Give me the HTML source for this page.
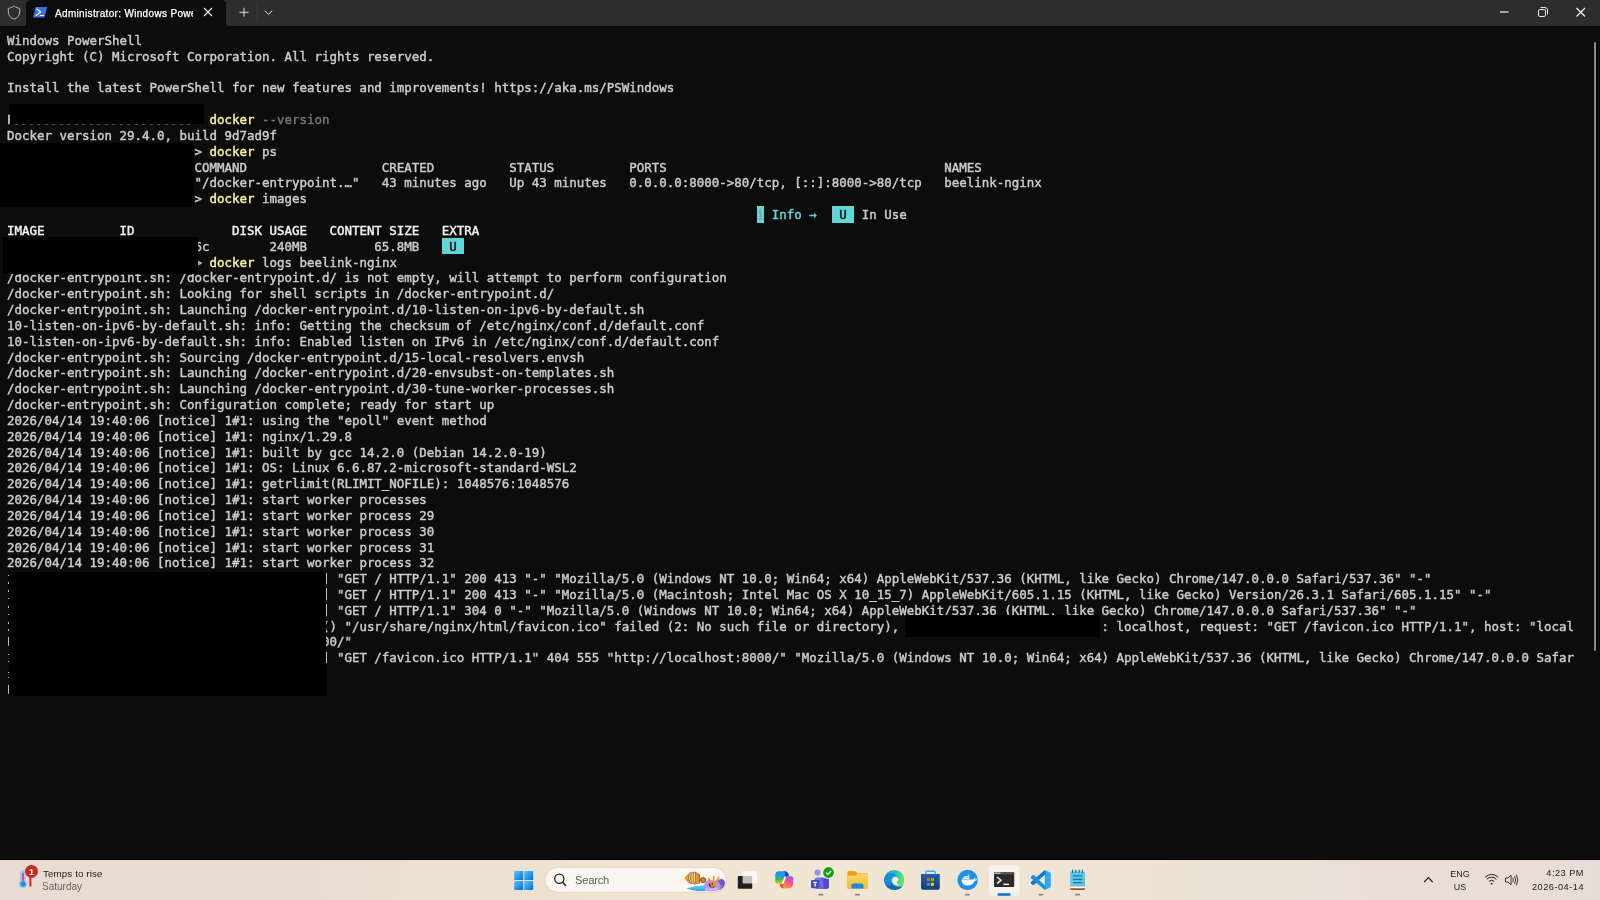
<!DOCTYPE html>
<html lang="en"><head><meta charset="utf-8"><title>Administrator: Windows PowerShell</title>
<style>
*{box-sizing:border-box;margin:0;padding:0}
html,body{width:1600px;height:900px;overflow:hidden;background:#0c0c0c}
body{position:relative;font-family:"Liberation Sans",sans-serif}
#titlebar{position:absolute;left:0;top:0;width:1600px;height:26px;background:#2d2d2d}
#tabtitle{position:absolute;left:54.6px;top:7px;width:137.6px;height:14px;overflow:hidden;white-space:nowrap;color:#fff;font-size:10px;line-height:14px;letter-spacing:0.33px;will-change:transform;-webkit-text-stroke:0.25px}
#term{position:absolute;left:6.7px;top:33px;white-space:pre;font-family:"DejaVu Sans Mono","Liberation Mono",monospace;font-size:12.46px;line-height:15.8333px;color:#cccccc;will-change:transform;-webkit-text-stroke:0.42px}
#term b{color:#f2f2f2;font-weight:normal}
.y{color:#f9f1a5}.g{color:#767676}.c{color:#61d6d6}.cb{background:#61d6d6;color:#0c0c0c;padding:0.8px 0 0.6px}.ci{color:#7fa3a3}
.box{position:absolute;background:#000}
#marks i{position:absolute;left:8px;width:1px;background:#b8b8b8;display:block}
#dash{position:absolute;left:15px;top:124px;width:176px;height:1px;background:repeating-linear-gradient(90deg,#8a8a8a 0 3px,transparent 3px 7.5px);opacity:.5}
#scroll{position:absolute;left:1594px;top:42px;width:2px;height:609px;background:#8a8a8a;border-radius:1px}
.tt{position:absolute;font-size:10px;line-height:14px;white-space:nowrap;margin-top:-860px;will-change:transform}
.ts{position:absolute;font-size:9px;line-height:12px;white-space:nowrap;color:#1c1c1c;margin-top:-860px;will-change:transform}
#taskbar{position:absolute;left:0;top:860px;width:1600px;height:40px;background:linear-gradient(90deg,#e8dbd3 0%,#e9ddd3 20%,#efe4d2 40%,#f1e6d2 52%,#efe4d4 65%,#eadfd6 82%,#e8dcd6 100%)}
</style></head><body>
<div id="titlebar">
<svg id="tbsvg" width="1600" height="27" viewBox="0 0 1600 27" style="position:absolute;left:0;top:0">
<path d="M23 26.5 L23 26 Q26 26 26 23 L26 5 Q26 0 31 0 L222 0 Q226 0 226 4 L226 23 Q226 26 229 26 L229 26.5 Z" fill="#0c0c0c"/>
<path d="M14 6 C16.2 7.6 18 8.2 19.7 8.3 L19.7 12 C19.7 15.6 17.3 18 14 19.2 C10.7 18 8.3 15.6 8.3 12 L8.3 8.3 C10 8.2 11.8 7.6 14 6 Z" fill="none" stroke="#b4b4b4" stroke-width="1"/>
<path d="M35.6 7 L47.2 7 L44.6 17.4 L33 17.4 Z" fill="#3b72da"/>
<path d="M36.8 9 L40.6 12 L36 15.6" fill="none" stroke="#fff" stroke-width="1.2" stroke-linecap="round" stroke-linejoin="round"/>
<path d="M40.3 15.5 L43.4 15.5" stroke="#fff" stroke-width="1.2" stroke-linecap="round"/>
<path d="M204 8 L212 16 M212 8 L204 16" stroke="#f0f0f0" stroke-width="1.1"/>
<path d="M239.5 12.3 L248.5 12.3 M244 7.8 L244 16.8" stroke="#e0e0e0" stroke-width="1"/>
<path d="M257 2.5 L257 22" stroke="#3b3b3b" stroke-width="1"/>
<path d="M264.8 10.8 L268.5 14.4 L272.2 10.8" fill="none" stroke="#e0e0e0" stroke-width="1"/>
<path d="M1500 12 L1508.5 12" stroke="#f0f0f0" stroke-width="1.2"/>
<rect x="1538.5" y="9.5" width="7" height="7" rx="1.5" fill="none" stroke="#e6e6e6" stroke-width="1"/>
<path d="M1540.5 7.5 L1545 7.5 Q1547.5 7.5 1547.5 10 L1547.5 14.5" fill="none" stroke="#e6e6e6" stroke-width="1"/>
<path d="M1576.5 8 L1585 16.5 M1585 8 L1576.5 16.5" stroke="#f4f4f4" stroke-width="1.2"/>
</svg>
<div id="tabtitle">Administrator: Windows PowerShell</div>
</div>
<pre id="term">Windows PowerShell
Copyright (C) Microsoft Corporation. All rights reserved.

Install the latest PowerShell for new features and improvements! https://aka.ms/PSWindows

P                          <span class="y">docker</span> <span class="g">--version</span>
Docker version 29.4.0, build 9d7ad9f
                         &gt; <span class="y">docker</span> ps
                         COMMAND                  CREATED          STATUS          PORTS                                     NAMES
                         &quot;/docker-entrypoint.…&quot;   43 minutes ago   Up 43 minutes   0.0.0.0:8000-&gt;80/tcp, [::]:8000-&gt;80/tcp   beelink-nginx
                         &gt; <span class="y">docker</span> images
                                                                                                    <span class="cb ci">i</span><span class="c"> Info →</span>  <span class="cb"> U </span> In Use
<b>IMAGE          ID             DISK USAGE   CONTENT SIZE   EXTRA</b>
                         6c        240MB         65.8MB   <span class="cb"> U </span>
                         &gt; <span class="y">docker</span> logs beelink-nginx
/docker-entrypoint.sh: /docker-entrypoint.d/ is not empty, will attempt to perform configuration
/docker-entrypoint.sh: Looking for shell scripts in /docker-entrypoint.d/
/docker-entrypoint.sh: Launching /docker-entrypoint.d/10-listen-on-ipv6-by-default.sh
10-listen-on-ipv6-by-default.sh: info: Getting the checksum of /etc/nginx/conf.d/default.conf
10-listen-on-ipv6-by-default.sh: info: Enabled listen on IPv6 in /etc/nginx/conf.d/default.conf
/docker-entrypoint.sh: Sourcing /docker-entrypoint.d/15-local-resolvers.envsh
/docker-entrypoint.sh: Launching /docker-entrypoint.d/20-envsubst-on-templates.sh
/docker-entrypoint.sh: Launching /docker-entrypoint.d/30-tune-worker-processes.sh
/docker-entrypoint.sh: Configuration complete; ready for start up
2026/04/14 19:40:06 [notice] 1#1: using the "epoll" event method
2026/04/14 19:40:06 [notice] 1#1: nginx/1.29.8
2026/04/14 19:40:06 [notice] 1#1: built by gcc 14.2.0 (Debian 14.2.0-19)
2026/04/14 19:40:06 [notice] 1#1: OS: Linux 6.6.87.2-microsoft-standard-WSL2
2026/04/14 19:40:06 [notice] 1#1: getrlimit(RLIMIT_NOFILE): 1048576:1048576
2026/04/14 19:40:06 [notice] 1#1: start worker processes
2026/04/14 19:40:06 [notice] 1#1: start worker process 29
2026/04/14 19:40:06 [notice] 1#1: start worker process 30
2026/04/14 19:40:06 [notice] 1#1: start worker process 31
2026/04/14 19:40:06 [notice] 1#1: start worker process 32
                                          ] "GET / HTTP/1.1" 200 413 "-" "Mozilla/5.0 (Windows NT 10.0; Win64; x64) AppleWebKit/537.36 (KHTML, like Gecko) Chrome/147.0.0.0 Safari/537.36" "-"
                                          ] "GET / HTTP/1.1" 200 413 "-" "Mozilla/5.0 (Macintosh; Intel Mac OS X 10_15_7) AppleWebKit/605.1.15 (KHTML, like Gecko) Version/26.3.1 Safari/605.1.15" "-"
                                          ] "GET / HTTP/1.1" 304 0 "-" "Mozilla/5.0 (Windows NT 10.0; Win64; x64) AppleWebKit/537.36 (KHTML, like Gecko) Chrome/147.0.0.0 Safari/537.36" "-"
                                          () "/usr/share/nginx/html/favicon.ico" failed (2: No such file or directory),                           : localhost, request: "GET /favicon.ico HTTP/1.1", host: "local
                                          00/"
                                          ] "GET /favicon.ico HTTP/1.1" 404 555 "http://localhost:8000/" "Mozilla/5.0 (Windows NT 10.0; Win64; x64) AppleWebKit/537.36 (KHTML, like Gecko) Chrome/147.0.0.0 Safar</pre>
<div class="box" style="left:10px;top:104px;width:194px;height:20px"></div>
<div class="box" style="left:0;top:143px;width:194px;height:64px"></div>
<div class="box" style="left:3px;top:237px;width:195px;height:37px"></div>
<div class="box" style="left:9px;top:572px;width:317px;height:124px"></div>
<div class="box" style="left:906px;top:615px;width:194px;height:22px"></div>
<div id="marks"><i style="top:574.6px;height:1.4px"></i><i style="top:582.2px;height:1.4px"></i><i style="top:590.4px;height:1.4px"></i><i style="top:598px;height:1.4px"></i><i style="top:606.4px;height:1.4px"></i><i style="top:613.8px;height:1.4px"></i><i style="top:622.2px;height:1.4px"></i><i style="top:629.4px;height:1.4px"></i><i style="top:654px;height:1.4px"></i><i style="top:661px;height:1.4px"></i><i style="top:672px;height:1.4px"></i><i style="top:677px;height:1.4px"></i><i style="top:636.6px;height:9.8px"></i><i style="top:684.9px;height:9.2px"></i><i style="left:326.1px;width:1.3px;top:572.5px;height:11.8px;background:#c4c4c4"></i><i style="left:326.1px;width:1.3px;top:588.4px;height:11.8px;background:#c4c4c4"></i><i style="left:326.1px;width:1.3px;top:604.2px;height:11.8px;background:#c4c4c4"></i><i style="left:326.1px;width:1.3px;top:651.7px;height:11.8px;background:#c4c4c4"></i></div>
<div id="dash"></div>
<div id="scroll"></div>
<div style="position:absolute;left:0;top:859px;width:1600px;height:1px;background:#040404"></div>
<div id="taskbar">
<svg width="1600" height="40" viewBox="0 860 1600 40" style="position:absolute;left:0;top:0">
<defs>
<linearGradient id="gwin" x1="0" y1="0" x2="1" y2="1"><stop offset="0" stop-color="#52c6ff"/><stop offset="1" stop-color="#0670d0"/></linearGradient>
<linearGradient id="gfold" x1="0" y1="0" x2="0" y2="1"><stop offset="0" stop-color="#ffd968"/><stop offset="1" stop-color="#f7bb2c"/></linearGradient>
<linearGradient id="gstore" x1="0" y1="0" x2="0" y2="1"><stop offset="0" stop-color="#1f5fad"/><stop offset="1" stop-color="#163d75"/></linearGradient>
<linearGradient id="gcopL" x1="0" y1="0" x2="0" y2="1"><stop offset="0" stop-color="#1a96f2"/><stop offset="0.35" stop-color="#1fa0d8"/><stop offset="0.65" stop-color="#46b85a"/><stop offset="1" stop-color="#efd000"/></linearGradient>
<linearGradient id="gcopR" x1="0.8" y1="0" x2="0.2" y2="1"><stop offset="0" stop-color="#a052f2"/><stop offset="0.45" stop-color="#ee4f94"/><stop offset="1" stop-color="#ff9a3c"/></linearGradient>
<linearGradient id="gedge" x1="0" y1="0" x2="1" y2="0.3"><stop offset="0" stop-color="#1ea0e0"/><stop offset="0.6" stop-color="#2cc2b8"/><stop offset="1" stop-color="#6ee060"/></linearGradient>
<linearGradient id="gteams" x1="0" y1="0" x2="1" y2="0"><stop offset="0" stop-color="#7b83eb"/><stop offset="1" stop-color="#5a4fd2"/></linearGradient>
<linearGradient id="gwater" x1="0" y1="0" x2="0" y2="1"><stop offset="0" stop-color="#58d6e2"/><stop offset="1" stop-color="#38a2d8"/></linearGradient>
</defs>
<!-- weather -->
<rect x="20" y="870" width="6" height="16" rx="3" fill="#93cdf6"/>
<circle cx="23" cy="884" r="4.3" fill="#93cdf6"/>
<rect x="22" y="872.5" width="2" height="9" rx="1" fill="#e8506a"/>
<circle cx="23" cy="884" r="2.7" fill="#2b8fe0"/>
<rect x="29.4" y="877" width="2" height="9.5" fill="#f01a1a"/>
<circle cx="31.5" cy="871.4" r="6.4" fill="#c42b1c"/>
<!-- start -->
<rect x="514.2" y="871" width="9" height="9" rx="0.6" fill="url(#gwin)"/>
<rect x="524.2" y="871" width="9" height="9" rx="0.6" fill="url(#gwin)"/>
<rect x="514.2" y="881" width="9" height="9" rx="0.6" fill="url(#gwin)"/>
<rect x="524.2" y="881" width="9" height="9" rx="0.6" fill="url(#gwin)"/>
<!-- search pill -->
<rect x="545" y="867.3" width="181.6" height="25" rx="12.5" fill="#faf6f1" stroke="#dfd2c2" stroke-width="1"/>
<circle cx="559.3" cy="878.8" r="4.6" fill="none" stroke="#222" stroke-width="1.3"/>
<path d="M562.7 882.3 L565.6 885.4" stroke="#222" stroke-width="1.5" stroke-linecap="round"/>
<!-- fish -->
<path d="M686.4 888.2 Q696 885.4 705.4 885.2 L705.4 891 Q693 891.4 686.4 888.2 Z" fill="url(#gwater)"/>
<path d="M684.7 878.2 Q687 873.6 692 871.9 Q696.4 871.4 699.4 873.6 Q700.4 878.6 699.4 883.6 Q695 885 690.6 883.6 Q686.6 882 684.7 878.2 Z" fill="#f29212"/>
<path d="M689.4 873.2 Q688 878 689.8 883 L691.2 883.5 Q689.8 878 691 872.4 Z" fill="#f4f6fc" stroke="#2a2448" stroke-width="0.45"/>
<path d="M694 872 Q693 878 694.4 884.2 L695.8 884 Q694.8 878 695.6 872.2 Z" fill="#f4f6fc" stroke="#2a2448" stroke-width="0.45"/>
<path d="M691.4 873.4 Q693 872.6 693.6 873.6 L693.4 882.6 L691.8 882.4 Q690.8 878 691.4 873.4 Z" fill="#fbb81c"/>
<path d="M699.2 874 Q700.4 878.6 699.2 883.4" stroke="#2a2448" stroke-width="0.6" fill="none"/>
<circle cx="703.1" cy="880.1" r="2.5" fill="#f57e08" stroke="#2a2040" stroke-width="0.7"/>
<path d="M704 886.6 Q704.4 881 709 879.6 Q712 881 716.4 880.6 Q718.4 878.6 721.6 878.8 Q725.2 879.6 725 883.4 Q724.4 888.4 719 890.2 Q711 891.6 706 890.6 Q703.8 889.4 704 886.6 Z" fill="#b094ea"/>
<path d="M717.6 881 Q720 878.8 723 879.4 Q725.2 880.6 724.8 884 Q724 887.6 720.4 889.4 Q722 885 717.6 881 Z" fill="#6a58cc"/>
<path d="M708.6 884 Q712 881.8 715.4 883.6 Q716 887 712.4 888 Q709 887.6 708.6 884 Z" fill="#2e2458"/>
<path d="M711.6 886 L709 878.6 M713.4 885.6 L713.8 876.4 M715 885.8 L718.6 877 M712 887 L716 883" stroke="#f2901c" stroke-width="1.5" stroke-linecap="round"/>
<path d="M705.4 888 Q711 890.6 718.4 888.2" stroke="#d6bcf6" stroke-width="1.3" fill="none"/>
<path d="M719.6 888.6 L722.4 885.4" stroke="#f07868" stroke-width="1" stroke-linecap="round"/>
<!-- task view -->
<rect x="737.8" y="876.1" width="14.4" height="12.7" rx="0.8" fill="#1f1f1f"/>
<rect x="742.6" y="871" width="14.6" height="12.6" rx="0.8" fill="#ffffff" fill-opacity="0.72"/>
<!-- copilot -->
<path d="M778 871.2 L785 871.2 Q788.6 871.6 788.9 876.4 L784.6 876.4 L781.4 884 L778 884 Q775.3 883.8 775.2 881 L775.3 874 Q775.6 871.4 778 871.2 Z" fill="url(#gcopL)"/>
<path d="M784 871.2 Q788.5 871.2 788.9 876.4 L785.4 876.4 Q785.8 873 784 871.2 Z" fill="#1446cc"/>
<path d="M779.6 884 L783.4 884 L785.6 888.2 L782.6 888.2 Q780.4 887.8 779.6 884 Z" fill="#f0502c"/>
<path d="M785.8 876.2 L790.8 876.2 Q793.5 876.4 793.4 879.2 L792.9 884.6 Q792.3 888 789.2 888.2 L783.6 888.2 Q782.4 886.4 783.4 884 Z" fill="url(#gcopR)"/>
<path d="M784.8 877.2 L786.2 877.2 L783.4 883.6 L782 883.6 Z" fill="#fffaf0"/>
<!-- teams -->
<circle cx="817.6" cy="872.6" r="3.1" fill="#8f92f2"/>
<rect x="814.5" y="877.4" width="14.4" height="11.6" rx="2.2" fill="url(#gteams)"/>
<rect x="823.6" y="878.6" width="5.3" height="9.6" rx="1.6" fill="#5b45cf"/>
<rect x="811" y="880" width="8.2" height="8.2" rx="1" fill="#4a47c4"/>
<path d="M813.2 882.3 L817 882.3 M815.1 882.3 L815.1 886.4" stroke="#fff" stroke-width="1.3"/>
<circle cx="828.5" cy="872.5" r="6.3" fill="#fbf6ec"/>
<circle cx="828.5" cy="872.5" r="5.4" fill="#13a10e"/>
<path d="M826 872.6 L827.8 874.4 L831.2 871" stroke="#fff" stroke-width="1.2" fill="none"/>
<!-- explorer -->
<path d="M847.4 872.2 Q847.4 871 848.6 871 L854.4 871 Q855.4 871 856 871.8 L857 873 L866.3 873 Q867.5 873 867.5 874.2 L867.5 888.6 L847.4 888.6 Z" fill="#e3a312"/>
<path d="M847.4 875.6 L856 875.6 L857.6 873.6 L866.3 873.6 Q867.5 873.6 867.5 874.8 L867.5 887.4 Q867.5 888.6 866.3 888.6 L848.6 888.6 Q847.4 888.6 847.4 887.4 Z" fill="url(#gfold)"/>
<path d="M851.4 888.6 L851.4 885 Q851.4 883.4 853 883.4 L861.8 883.4 Q863.4 883.4 863.4 885 L863.4 888.6 Z" fill="#1b86da"/>
<!-- edge -->
<circle cx="894.2" cy="880" r="10.1" fill="url(#gedge)"/>
<path d="M884.2 881 Q884.5 873 891 873.4 Q889 876.5 890.4 880.5 Q892.5 886.5 899.5 887 Q902.4 886.8 903.6 884.2 Q902 889 896 890 Q886.5 890.5 884.2 881 Z" fill="#1466b4"/>
<path d="M884.1 880.5 Q884.6 874.4 890.4 873.2 Q894.5 872.8 897 875.4 Q892 875.2 890.6 879.2 Q889.6 882.6 891.6 886.2 Q885.6 885.6 884.1 880.5 Z" fill="#1b8ad8"/>
<path d="M892.2 880.4 Q892.5 877.2 895.6 877 Q898.6 877.3 898.4 880 Q898 881.6 896.8 882.2 Q896.6 884.4 899.8 884.8 Q896 886.4 893.4 884 Q892 882.4 892.2 880.4 Z" fill="#f2ead8"/>
<!-- store -->
<path d="M925.8 874.4 L925.8 872.6 Q925.8 871.3 927.1 871.3 L934 871.3 Q935.3 871.3 935.3 872.6 L935.3 874.4" fill="none" stroke="#38b4f2" stroke-width="1.4"/>
<path d="M921 874 L939.8 874 L939.8 887.2 Q939.8 889.8 937.2 889.8 L923.6 889.8 Q921 889.8 921 887.2 Z" fill="url(#gstore)"/>
<rect x="926.8" y="878" width="3.2" height="3.2" fill="#f25022"/>
<rect x="930.8" y="878" width="3.2" height="3.2" fill="#7fba00"/>
<rect x="926.8" y="882.8" width="3.2" height="3.2" fill="#00a4ef"/>
<rect x="930.8" y="882.8" width="3.2" height="3.2" fill="#ffb900"/>
<!-- docker -->
<circle cx="967.6" cy="880" r="10.2" fill="#1d8fe8"/>
<path d="M961.4 879.6 L972.6 879.6 Q974 879.4 974.4 877.6 Q975.4 878.2 975.4 879.2 Q976.6 878.8 977.2 879.4 Q976.4 880.8 974.8 880.8 Q973 885.6 967.4 885.6 Q962 885.6 961.4 879.6 Z" fill="#fff"/>
<path d="M962.6 877.6 L969.4 877.6 L969.4 879 L962.6 879 Z M964.4 876 L969.4 876 L969.4 877.2 L964.4 877.2 Z M967.6 874.4 L969.4 874.4 L969.4 875.6 L967.6 875.6 Z" fill="#e6f2fc"/>
<!-- terminal active -->
<rect x="988.4" y="864.4" width="31.4" height="31.6" rx="3.2" fill="#f7f1e9" stroke="#eadfd0" stroke-width="0.6"/>
<rect x="994" y="872.1" width="20.2" height="15" rx="1.2" fill="#2b2b2b"/>
<path d="M994 873.3 Q994 872.1 995.2 872.1 L1013 872.1 Q1014.2 872.1 1014.2 873.3 L1014.2 874.2 L994 874.2 Z" fill="#5a5a5a"/>
<rect x="994.6" y="872.6" width="6" height="1.4" fill="#b8b8b8"/>
<path d="M997 877 L1001 880.2 L997 883.6" fill="none" stroke="#e8e8e8" stroke-width="1.6"/>
<rect x="1003.4" y="883.6" width="5.6" height="1.5" fill="#f4f4f4"/>
<rect x="997.5" y="893.3" width="13.2" height="2.5" rx="1.25" fill="#0a6cd4"/>
<!-- vscode -->
<path d="M1044.6 870 L1050.8 872.8 L1050.8 887.2 L1044.6 890 Z" fill="#2aa9f4"/>
<path d="M1044.8 870 L1046 873.6 L1034.2 884.8 Q1033.2 885.4 1032.2 884.6 L1031 883.4 Q1030.4 882.6 1031.2 881.8 Z" fill="#0a7dd0"/>
<path d="M1044.8 890 L1046 886.4 L1034.2 875.2 Q1033.2 874.6 1032.2 875.4 L1031 876.6 Q1030.4 877.4 1031.2 878.2 Z" fill="#1690e0"/>
<path d="M1044.6 875.6 L1044.6 884.4 L1039 880 Z" fill="#f0e5d4"/>
<!-- notepad -->
<rect x="1070.2" y="871.4" width="14.8" height="16.4" rx="1" fill="#5fc6ea"/>
<path d="M1072.6 870 L1072.6 872.6 M1075.8 870 L1075.8 872.6 M1079.2 870 L1079.2 872.6 M1082.4 870 L1082.4 872.6" stroke="#147c9e" stroke-width="1.2" stroke-linecap="round"/>
<path d="M1073 875.9 L1082.4 875.9 M1073 879.3 L1082.4 879.3 M1073 882.7 L1082.4 882.7" stroke="#147e9f" stroke-width="1.3"/>
<rect x="1070.2" y="886.6" width="14.8" height="1.6" fill="#fdfdfd"/>
<path d="M1070.2 888.2 L1085 888.2 L1085 889 Q1085 890.1 1083.8 890.1 L1071.4 890.1 Q1070.2 890.1 1070.2 889 Z" fill="#b04c04"/>
<!-- indicators -->
<g fill="#8a847e"><rect x="818.4" y="893.8" width="5" height="1.8" rx="0.9"/><rect x="855" y="893.8" width="5" height="1.8" rx="0.9"/><rect x="964.9" y="893.8" width="5" height="1.8" rx="0.9"/><rect x="1038.5" y="893.8" width="5" height="1.8" rx="0.9"/><rect x="1075" y="893.8" width="5" height="1.8" rx="0.9"/></g>
<!-- tray -->
<path d="M1424.2 882 L1428.4 877.6 L1432.6 882" fill="none" stroke="#222" stroke-width="1.2"/>
<circle cx="1491.6" cy="883.7" r="0.9" fill="#222"/>
<path d="M1488.8 881.4 Q1491.6 879 1494.4 881.4 M1486.8 879.2 Q1491.6 875.2 1496.4 879.2 M1485 877.2 Q1491.6 871.6 1498.2 877.2" fill="none" stroke="#222" stroke-width="1"/>
<path d="M1505.5 878 L1508 878 L1511 875.2 L1511 884.8 L1508 882 L1505.5 882 Z" fill="none" stroke="#222" stroke-width="0.9" stroke-linejoin="round"/>
<path d="M1512.8 877.8 Q1514 880 1512.8 882.2 M1514.6 876.2 Q1516.6 880 1514.6 883.8 M1516.4 874.6 Q1519.2 880 1516.4 885.4" fill="none" stroke="#222" stroke-width="0.9"/>
</svg>
<div class="tt" style="left:42.6px;top:867.3px;color:#1c1c1c;font-size:9.8px;letter-spacing:0.1px">Temps to rise</div>
<div class="tt" style="left:42.4px;top:880.2px;color:#6a625c">Saturday</div>
<div class="tt" style="left:28.6px;top:865px;color:#fff;font-size:9px;font-weight:bold">1</div>
<div class="tt" style="left:575.3px;top:872.6px;color:#605c58;font-size:11.2px;letter-spacing:-0.25px">Search</div>
<div class="ts" style="left:1440px;top:868.2px;width:40px;text-align:center">ENG</div>
<div class="ts" style="left:1440px;top:881.3px;width:40px;text-align:center">US</div>
<div class="ts" style="left:1484.2px;top:867.3px;width:100px;text-align:right;font-size:9.2px;letter-spacing:0.5px">4:23 PM</div>
<div class="ts" style="left:1484.2px;top:880.5px;width:100px;text-align:right;font-size:9.2px;letter-spacing:0.5px">2026-04-14</div>
</div>
</body></html>
